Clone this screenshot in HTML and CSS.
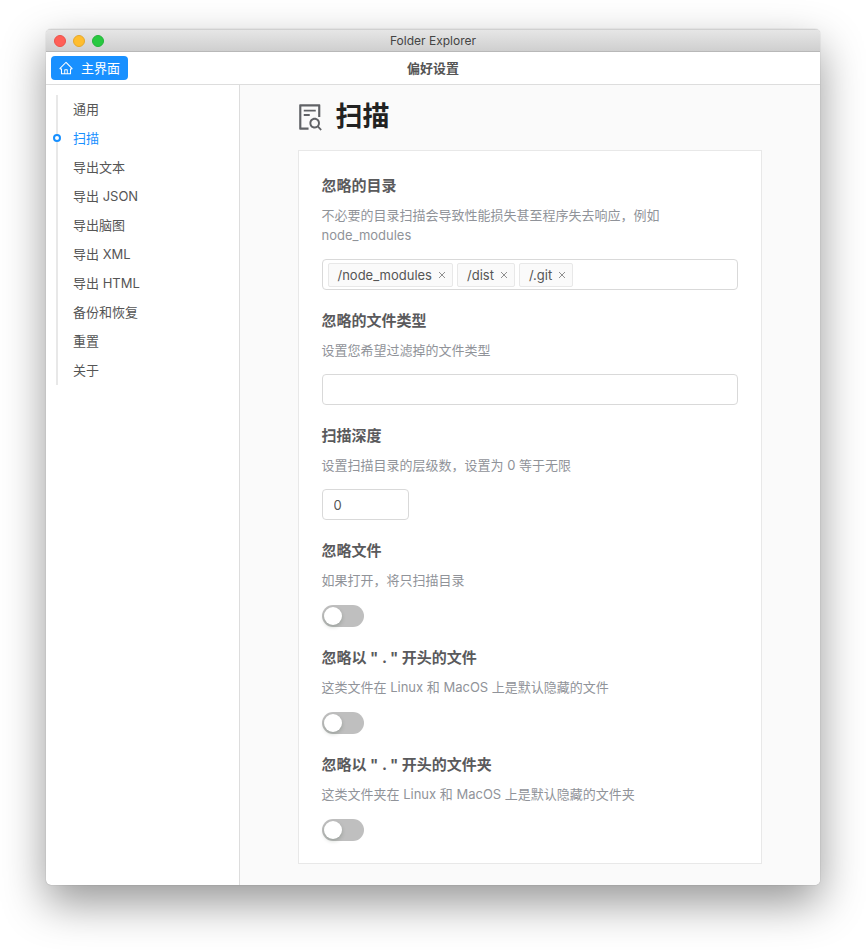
FILE: index.html
```html
<!DOCTYPE html>
<html lang="zh-CN">
<head>
<meta charset="utf-8">
<title>Folder Explorer</title>
<link rel="stylesheet" href="styles.css">
</head>
<body>
<div class="window">
  <header class="titlebar">
    <div class="lights"><span class="light red"></span><span class="light yellow"></span><span class="light green"></span></div>
    <span class="app-name">Folder Explorer</span>
  </header>
  <div class="toolbar">
    <button class="home" type="button">
      <svg class="home-icon" viewBox="32 32 960 960" aria-hidden="true"><path d="M946.5 505L560.1 118.8l-25.9-25.9a31.5 31.5 0 0 0-44.4 0L77.5 505a63.9 63.9 0 0 0-18.8 46c.4 35.2 29.7 63.3 64.9 63.3h42.5V940h691.8V614.3h43.4c17.1 0 33.2-6.7 45.3-18.8a63.6 63.6 0 0 0 18.7-45.3c0-17-6.7-33.1-18.8-45.2zM568 868H456V664h112v204zm217.9-325.7V868H632V640c0-22.1-17.9-40-40-40H432c-22.1 0-40 17.9-40 40v228H238.1V542.3h-96l370-369.7 23.1 23.1L882 542.3h-96.1z"/></svg>
      <span>主界面</span>
    </button>
    <span class="toolbar-title">偏好设置</span>
  </div>
  <div class="body">
    <nav class="sidebar">
      <ul class="anchors">
        <li><a href="#general">通用</a></li>
        <li class="active"><a href="#scan">扫描</a></li>
        <li><a href="#text">导出文本</a></li>
        <li><a href="#json">导出 JSON</a></li>
        <li><a href="#mind">导出脑图</a></li>
        <li><a href="#xml">导出 XML</a></li>
        <li><a href="#html">导出 HTML</a></li>
        <li><a href="#backup">备份和恢复</a></li>
        <li><a href="#reset">重置</a></li>
        <li><a href="#about">关于</a></li>
      </ul>
    </nav>
    <main class="content" id="scan">
      <h1 class="page-title">
        <svg class="page-icon" viewBox="96 76 800 880" aria-hidden="true"><path d="M688 312v-48c0-4.4-3.6-8-8-8H296c-4.4 0-8 3.6-8 8v48c0 4.4 3.6 8 8 8h384c4.4 0 8-3.6 8-8zm-392 88c-4.4 0-8 3.6-8 8v48c0 4.4 3.6 8 8 8h184c4.4 0 8-3.6 8-8v-48c0-4.4-3.6-8-8-8H296zm144 452H208V148h560v344c0 4.4 3.6 8 8 8h56c4.4 0 8-3.6 8-8V108c0-17.7-14.3-32-32-32H168c-17.7 0-32 14.3-32 32v784c0 17.7 14.3 32 32 32h272c4.4 0 8-3.6 8-8v-56c0-4.4-3.6-8-8-8zm445.7 51.5l-93.3-93.3C814.7 780.7 828 743.9 828 704c0-97.2-78.8-176-176-176s-176 78.8-176 176 78.8 176 176 176c35.8 0 69-10.7 96.8-29l94.7 94.7c1.6 1.6 3.6 2.3 5.6 2.3s4.1-.8 5.6-2.3l31-31a7.9 7.9 0 0 0 0-11.2zM652 816c-61.9 0-112-50.1-112-112s50.1-112 112-112 112 50.1 112 112-50.1 112-112 112z"/></svg>
        <span>扫描</span>
      </h1>
      <form class="panel">
        <div class="field">
          <label class="label" for="dirs">忽略的目录</label>
          <p class="hint">不必要的目录扫描会导致性能损失甚至程序失去响应，例如 node_modules</p>
          <div class="box tags">
            <span class="tag">/node_modules<button class="remove" type="button" aria-label="移除 /node_modules"><svg viewBox="0 0 8 8"><path d="M1 1l6 6M7 1l-6 6"/></svg></button></span>
            <span class="tag">/dist<button class="remove" type="button" aria-label="移除 /dist"><svg viewBox="0 0 8 8"><path d="M1 1l6 6M7 1l-6 6"/></svg></button></span>
            <span class="tag">/.git<button class="remove" type="button" aria-label="移除 /.git"><svg viewBox="0 0 8 8"><path d="M1 1l6 6M7 1l-6 6"/></svg></button></span>
            <input class="tag-input" id="dirs" type="text">
          </div>
        </div>
        <div class="field">
          <label class="label" for="types">忽略的文件类型</label>
          <p class="hint">设置您希望过滤掉的文件类型</p>
          <input class="box" id="types" type="text">
        </div>
        <div class="field">
          <label class="label" for="depth">扫描深度</label>
          <p class="hint">设置扫描目录的层级数，设置为 0 等于无限</p>
          <input class="box depth" id="depth" type="text" inputmode="numeric" value="0">
        </div>
        <div class="field">
          <label class="label" for="files">忽略文件</label>
          <p class="hint">如果打开，将只扫描目录</p>
          <input class="switch" id="files" type="checkbox" role="switch">
        </div>
        <div class="field">
          <label class="label" for="dotfiles">忽略以 " . " 开头的文件</label>
          <p class="hint">这类文件在 Linux 和 MacOS 上是默认隐藏的文件</p>
          <input class="switch" id="dotfiles" type="checkbox" role="switch">
        </div>
        <div class="field">
          <label class="label" for="dotdirs">忽略以 " . " 开头的文件夹</label>
          <p class="hint">这类文件夹在 Linux 和 MacOS 上是默认隐藏的文件夹</p>
          <input class="switch" id="dotdirs" type="checkbox" role="switch">
        </div>
      </form>
    </main>
  </div>
</div>
</body>
</html>
```
FILE: styles.css
```css
*, *::before { box-sizing: border-box; }

body {
  margin: 0;
  min-height: 100vh;
  display: flex;
  padding: 29px 46px 65px;
  background: #fff;
  color: #555;
  font: 13px/20px Inter, "Noto Sans CJK SC", sans-serif;
}

button, input { font: inherit; color: inherit; }

.window {
  flex: 1;
  min-width: 0;
  display: flex;
  flex-direction: column;
  border-radius: 5px;
  overflow: hidden;
  background: #fff;
  box-shadow: 0 0 1px rgba(0, 0, 0, .4), 0 18px 44px rgba(0, 0, 0, .41);
}

.titlebar {
  display: grid;
  grid-template-columns: 1fr auto 1fr;
  align-items: center;
  height: 23px;
  padding: 0 8px;
  background: linear-gradient(#e6e6e6, #cfcfcf);
  border-top: 1px solid #d0d0d0;
  border-bottom: 1px solid #b8b8b8;
  color: #444;
}
.app-name { font-size: 12px; }
.lights { display: flex; gap: 7px; }
.light { width: 12px; height: 12px; border-radius: 50%; }
.red { background: #ff5f57; border: 1px solid #ec5149; }
.yellow { background: #ffbd2e; border: 1px solid #e5a82b; }
.green { background: #28c940; border: 1px solid #24b43a; }

.toolbar {
  display: grid;
  grid-template-columns: 1fr auto 1fr;
  align-items: center;
  height: 33px;
  padding: 0 5px;
  border-bottom: 1px solid #ddd;
}
.home {
  justify-self: start;
  display: flex;
  align-items: center;
  gap: 8px;
  height: 24px;
  padding: 0 8px;
  border: 0;
  border-radius: 4px;
  background: #1890ff;
  color: #fff;
}
.home-icon { width: 14px; height: 14px; fill: #fff; }
.toolbar-title { font-weight: 700; }

.body { flex: 1; display: flex; }

.sidebar {
  flex: none;
  width: 25%;
  padding: 10px;
  border-right: 1px solid #ddd;
}
.anchors {
  margin: 0;
  padding: 0 0 0 15px;
  list-style: none;
  border-left: 2px solid #e8e8e8;
}
.anchors li { position: relative; line-height: 29px; }
.anchors a { color: #555; text-decoration: none; }
.anchors .active a { color: #1890ff; }
.active::before {
  content: "";
  position: absolute;
  left: -20px;
  top: 10px;
  width: 8px;
  height: 8px;
  border: 2px solid #1890ff;
  border-radius: 50%;
  background: #fff;
}

.content {
  flex: 1;
  min-width: 0;
  padding: 12px 58px 21px;
  background: #fafafa;
}
.page-title {
  display: flex;
  align-items: center;
  gap: 14px;
  margin: 0 0 13px;
  color: #222;
  font-size: 27px;
  line-height: 40px;
  font-weight: 700;
}
.page-icon { width: 24px; height: 27px; fill: #606266; }

.panel {
  display: flex;
  flex-direction: column;
  gap: 20px;
  padding: 24px 23px 22px;
  border: 1px solid #e8e8e8;
  background: #fff;
}
.label {
  display: block;
  color: #5a5a5c;
  font-size: 15px;
  line-height: 22px;
  font-weight: 700;
}
.hint { margin: 8px 0 14px; color: #909399; }

.box {
  display: block;
  width: 100%;
  height: 31px;
  padding: 0 11px;
  border: 1px solid #d9d9d9;
  border-radius: 4px;
  background: #fff;
  outline: 0;
}
.depth { width: 87px; }
.tags { display: flex; align-items: center; gap: 4px; padding: 0 5px; }
.tag {
  display: flex;
  align-items: center;
  gap: 6px;
  height: 24px;
  padding: 0 6px 0 9px;
  border: 1px solid #e8e8e8;
  border-radius: 2px;
  background: #fafafa;
}
.remove { display: flex; padding: 0; border: 0; background: none; }
.remove svg { width: 8px; height: 8px; stroke: #909090; fill: none; }
.tag-input { flex: 1; min-width: 0; border: 0; outline: 0; background: none; }

.switch {
  appearance: none;
  display: flex;
  align-items: center;
  width: 42px;
  height: 22px;
  margin: 0;
  padding: 0 2px;
  border-radius: 11px;
  background: #bfbfbf;
}
.field:has(.switch) .hint { margin-bottom: 15px; }
.switch::before {
  content: "";
  width: 18px;
  height: 18px;
  border-radius: 50%;
  background: #fff;
  box-shadow: 0 2px 4px rgba(0, 35, 11, .2);
}
.switch:checked { justify-content: flex-end; background: #1890ff; }
```
